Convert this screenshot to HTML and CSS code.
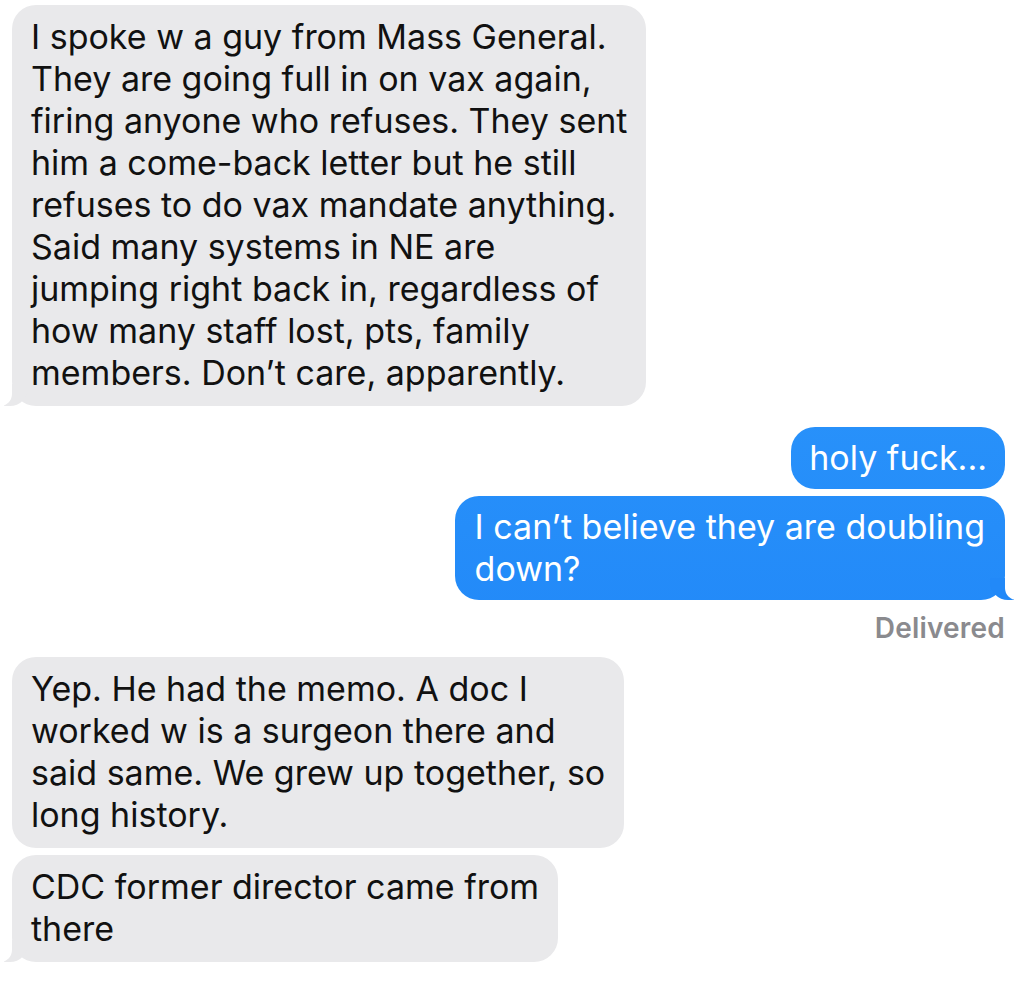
FILE: index.html
```html
<!DOCTYPE html>
<html>
<head>
<meta charset="utf-8">
<link rel="stylesheet" href="styles.css">
</head>
<body>
<div class="chat">
  <div class="msg them tail g1">I spoke w a guy from Mass General.<br>They are going full in on vax again,<br>firing anyone who refuses. They sent<br>him a come-back letter but he still<br>refuses to do vax mandate anything.<br>Said many systems in NE are<br>jumping right back in, regardless of<br>how many staff lost, pts, family<br>members. Don’t care, apparently.</div>
  <div class="msg me g2">holy fuck...</div>
  <div class="msg me tail g3">I can’t believe they are doubling<br>down?</div>
  <div class="status">Delivered</div>
  <div class="msg them g4">Yep. He had the memo. A doc I<br>worked w is a surgeon there and<br>said same. We grew up together, so<br>long history.</div>
  <div class="msg them tail g5">CDC former director came from<br>there</div>
</div>
</body>
</html>
```
FILE: styles.css
```css
html, body {
  margin: 0;
  padding: 0;
  background: #ffffff;
}
.chat {
  display: flex;
  flex-direction: column;
  padding: 5px 21px 0 12px;
  font-family: Inter, "Noto Sans", sans-serif;
  font-size: 34px;
  line-height: 42px;
  letter-spacing: 0;
}
.msg {
  position: relative;
  padding: 11px 19px 12px 19px;
  border-radius: 24px;
  white-space: nowrap;
}
.them {
  align-self: flex-start;
  background: #e9e9eb;
  color: #111111;
}
.me {
  align-self: flex-end;
  color: #ffffff;
  background: linear-gradient(#33a0fe, #2289f8);
  background-attachment: fixed;
  background-size: 100% 640px;
  padding: 10px 20px 10px 20px;
}
.them.tail::before {
  content: "";
  position: absolute;
  bottom: 0;
  left: -8px;
  width: 24px;
  height: 22px;
  background: #e9e9eb;
  border-bottom-right-radius: 18px;
}
.them.tail::after {
  content: "";
  position: absolute;
  bottom: 0;
  left: -24px;
  width: 24px;
  height: 22px;
  background: #ffffff;
  border-bottom-right-radius: 12px;
}
.me.tail::before {
  content: "";
  position: absolute;
  bottom: 0;
  right: -9px;
  width: 24px;
  height: 22px;
  background: #2289f8;
  border-bottom-left-radius: 18px;
}
.me.tail::after {
  content: "";
  position: absolute;
  bottom: 0;
  right: -24px;
  width: 24px;
  height: 22px;
  background: #ffffff;
  border-bottom-left-radius: 12px;
}
.g2 { margin-top: 21px; padding-left: 18px; padding-right: 18px; }
.g3 { margin-top: 7px; }
.status {
  align-self: flex-end;
  margin-top: 10px;
  font-size: 28px;
  line-height: 36px;
  font-weight: 600;
  color: #8a8a8e;
  letter-spacing: 0.2px;
}
.g4 { margin-top: 11px; }
.g5 { margin-top: 7px; }
```
